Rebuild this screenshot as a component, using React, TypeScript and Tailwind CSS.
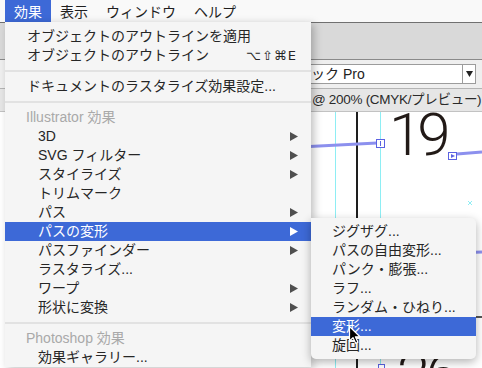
import React from "react";

type Item =
  | { kind: "item"; label: string; level: "top" | "sub"; arrow?: boolean; shortcut?: string; active?: boolean }
  | { kind: "sep" }
  | { kind: "header"; label: string };

const mainItems: Item[] = [
  { kind: "item", label: "オブジェクトのアウトラインを適用", level: "top" },
  { kind: "item", label: "オブジェクトのアウトライン", level: "top", shortcut: "⌥⇧⌘E" },
  { kind: "sep" },
  { kind: "item", label: "ドキュメントのラスタライズ効果設定...", level: "top" },
  { kind: "sep" },
  { kind: "header", label: "Illustrator 効果" },
  { kind: "item", label: "3D", level: "sub", arrow: true },
  { kind: "item", label: "SVG フィルター", level: "sub", arrow: true },
  { kind: "item", label: "スタイライズ", level: "sub", arrow: true },
  { kind: "item", label: "トリムマーク", level: "sub" },
  { kind: "item", label: "パス", level: "sub", arrow: true },
  { kind: "item", label: "パスの変形", level: "sub", arrow: true, active: true },
  { kind: "item", label: "パスファインダー", level: "sub", arrow: true },
  { kind: "item", label: "ラスタライズ...", level: "sub" },
  { kind: "item", label: "ワープ", level: "sub", arrow: true },
  { kind: "item", label: "形状に変換", level: "sub", arrow: true },
  { kind: "sep" },
  { kind: "header", label: "Photoshop 効果" },
  { kind: "item", label: "効果ギャラリー...", level: "sub" },
];

const subItems = [
  "ジグザグ...",
  "パスの自由変形...",
  "パンク・膨張...",
  "ラフ...",
  "ランダム・ひねり...",
  "変形...",
  "旋回...",
];

function Arrow({ white }: { white?: boolean }) {
  return (
    <svg width="8" height="9" viewBox="0 0 8 9">
      <path d="M0 0L8 4.5L0 9Z" fill={white ? "#ffffff" : "#4f4f4f"} />
    </svg>
  );
}

function MenuBar() {
  const titles = ["効果", "表示", "ウィンドウ", "ヘルプ"];
  return (
    <div className="flex h-[23px] items-stretch border-b border-[#707070] bg-[#f9f9f9] pl-[5px] text-[14px]">
      {titles.map((t, i) => (
        <div
          key={t}
          className={`flex items-center px-[9px] pt-[2px] ${
            i === 0 ? "bg-[#3d69d7] text-white" : "text-[#1f1f1f]"
          }`}
        >
          {t}
        </div>
      ))}
    </div>
  );
}

function Canvas() {
  return (
    <div className="relative h-[256px] overflow-hidden bg-white">
      <svg width="482" height="256" className="absolute inset-0">
        {/* guides */}
        <line x1="335.5" y1="0" x2="335.5" y2="256" stroke="#8eeef4" strokeWidth="1" />
        <line x1="380.5" y1="0" x2="380.5" y2="256" stroke="#8eeef4" strokeWidth="1" />
        {/* frame edge */}
        <line x1="357" y1="0" x2="357" y2="256" stroke="#1e1e1e" strokeWidth="2" />
        <line x1="300" y1="205" x2="482" y2="205" stroke="#1e1e1e" strokeWidth="1.5" />
        {/* text threads */}
        <line x1="300" y1="35" x2="377" y2="31" stroke="#8c90ee" strokeWidth="3" />
        <rect x="376.5" y="27.5" width="8" height="8" fill="#ffffff" stroke="#5b62e2" />
        <line x1="380.5" y1="29" x2="380.5" y2="34" stroke="#5b62e2" />
        <line x1="457" y1="42" x2="482" y2="40" stroke="#8c90ee" strokeWidth="3" />
        <rect x="448.5" y="40.5" width="8" height="7" fill="#ffffff" stroke="#5b62e2" />
        <path d="M451 42L455 44L451 46Z" fill="#5b62e2" />
        <line x1="430" y1="142" x2="482" y2="140" stroke="#8c90ee" strokeWidth="3" />
        <rect x="378.5" y="252.5" width="6" height="6" fill="#ffffff" stroke="#5b62e2" />
        {/* small x */}
        <path d="M468 89L472 93M472 89L468 93" stroke="#8eeef4" strokeWidth="1" />
      </svg>
      <div className="absolute left-[389px] top-0 font-['Roboto','Liberation_Sans',sans-serif] text-[60px] font-light leading-[46px] tracking-[-5px] text-[#221a17]">
        19
      </div>
      <div className="absolute left-[397px] top-[240px] font-['Roboto','Liberation_Sans',sans-serif] text-[60px] font-light leading-[46px] tracking-[-5px] text-[#221a17]">
        26
      </div>
    </div>
  );
}

function MainMenu() {
  return (
    <div className="absolute left-[5px] top-[22px] w-[306px] bg-[#f5f5f5] pt-[5px] text-[14px] text-[#262626] shadow-[3px_2px_8px_rgba(0,0,0,0.25)]">
      {mainItems.map((it, i) => {
        if (it.kind === "sep") {
          return (
            <div key={i} className="flex h-[12px] items-center">
              <div className="h-[2px] w-full bg-[#e2e2e2]" />
            </div>
          );
        }
        if (it.kind === "header") {
          return (
            <div key={i} className="flex h-[19px] items-center pl-[21px] text-[#a9a9a9]">
              {it.label}
            </div>
          );
        }
        return (
          <div
            key={i}
            className={`flex h-[19px] items-center justify-between pr-[13px] ${
              it.level === "top" ? "pl-[22px]" : "pl-[33px]"
            } ${it.active ? "bg-[#3d69d7] text-white" : ""}`}
          >
            <span>{it.label}</span>
            {it.arrow && <Arrow white={it.active} />}
            {it.shortcut && (
              <span className="pr-[1px] font-['DejaVu_Sans','Liberation_Sans',sans-serif] text-[13px] tracking-[1px]">
                {it.shortcut}
              </span>
            )}
          </div>
        );
      })}
    </div>
  );
}

function SubMenu() {
  return (
    <div className="absolute left-[311px] top-[218px] w-[165px] rounded-tr-[5px] rounded-b-[5px] bg-[#f5f5f5] py-[4px] text-[14px] text-[#262626] shadow-[0_3px_10px_rgba(0,0,0,0.3)]">
      {subItems.map((s) => (
        <div
          key={s}
          className={`flex h-[19px] items-center pl-[21px] ${
            s === "変形..." ? "bg-[#3d69d7] text-white" : ""
          }`}
        >
          {s}
        </div>
      ))}
    </div>
  );
}

function Cursor() {
  return (
    <svg width="14" height="20" viewBox="0 0 14 20" className="absolute left-[348px] top-[325px]">
      <path
        d="M1.5 1.5L1.5 16L5 12.6L7.6 18.3L9.9 17.3L7.4 11.8L12 11.8Z"
        fill="#000000"
        stroke="#ffffff"
        strokeWidth="1.2"
        strokeLinejoin="round"
      />
    </svg>
  );
}

export default function App() {
  return (
    <div className="relative h-[368px] w-[482px] overflow-hidden bg-white font-['Liberation_Sans','Noto_Sans_CJK_JP',sans-serif]">
      <MenuBar />
      <div className="flex flex-col">
        {/* control bar */}
        <div className="h-[37px] border-b border-[#8a8a8a] bg-[#d9d9d9]" />
        {/* character row */}
        <div className="flex h-[29px] items-center border-b border-[#b4b4b4] bg-[#efefef] pl-[250px] pr-[6px]">
          <div className="flex h-[20px] flex-1 items-center border border-[#9c9c9c] bg-white text-[14px] text-[#222]">
            <span className="flex-1 pl-[4px]">小塚ゴシック Pro</span>
            <div className="flex h-full w-[13px] items-center justify-center border-l border-[#9c9c9c]">
              <svg width="7" height="6" viewBox="0 0 7 6">
                <path d="M0 0H7L3.5 6Z" fill="#222" />
              </svg>
            </div>
          </div>
        </div>
        {/* document tab */}
        <div className="flex h-[23px] items-center overflow-hidden border-b border-[#c2c2c2] bg-[#e6e6e6] pl-[312px] text-[13.5px] tracking-[-0.3px] whitespace-nowrap text-[#2a2a2a]">
          @ 200% (CMYK/プレビュー)
        </div>
        <Canvas />
      </div>
      <MainMenu />
      <SubMenu />
      <Cursor />
    </div>
  );
}
